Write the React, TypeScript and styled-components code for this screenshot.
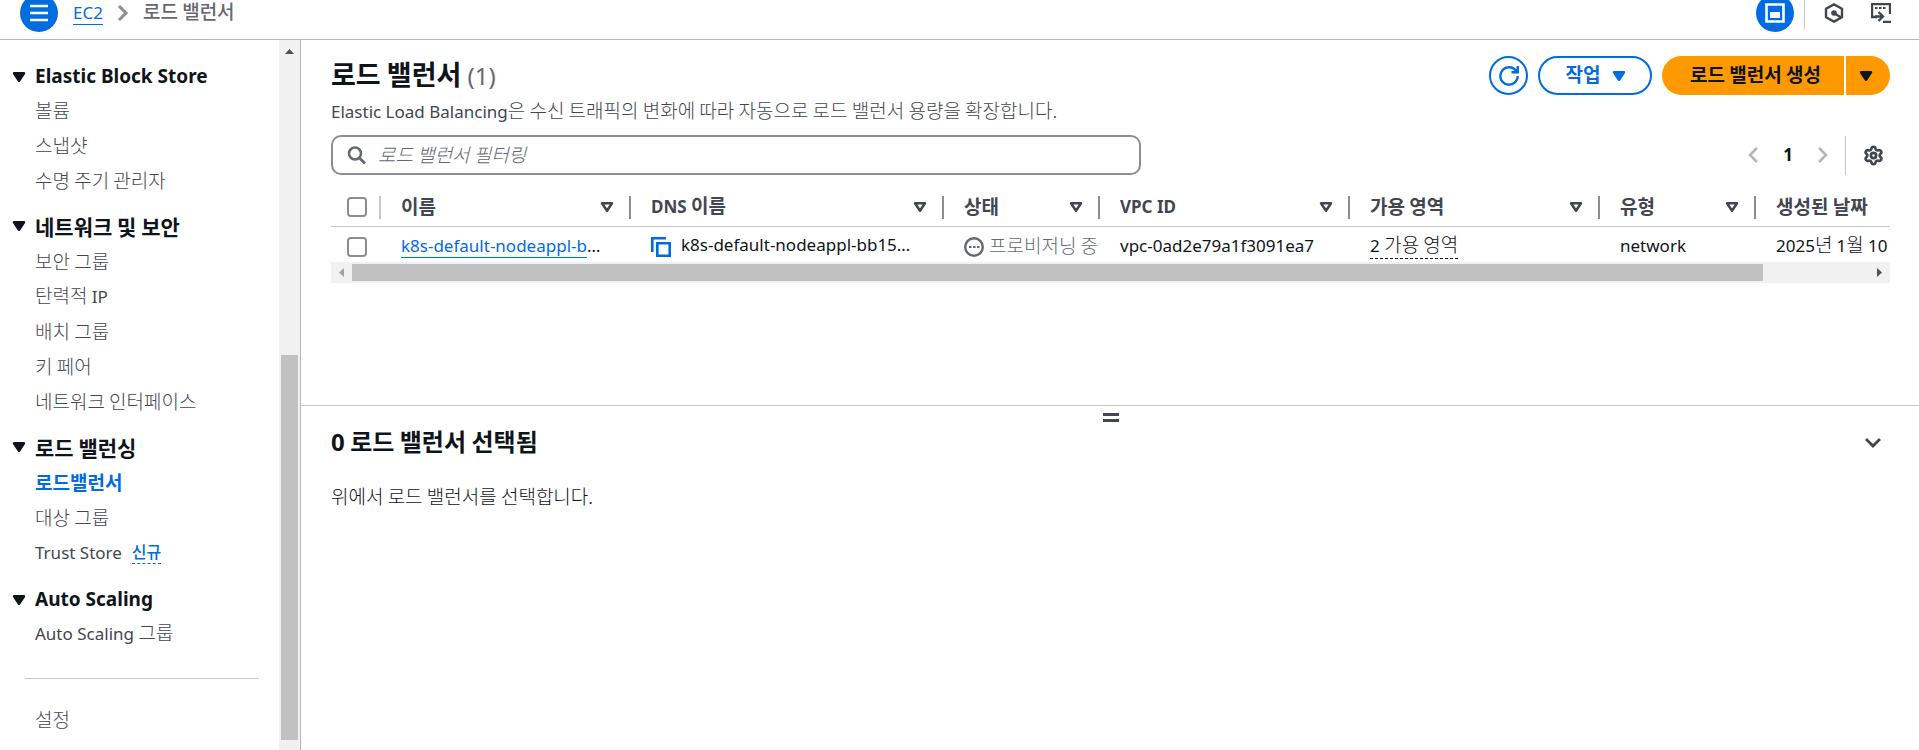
import React from 'react';
import styled, { createGlobalStyle, css } from 'styled-components';
import { Settings } from 'lucide-react';

const color = {
  text: '#0f141a',
  body: '#424650',
  muted: '#656871',
  blue: '#006ce0',
  orange: '#ff9900',
  line: '#b4b4bb',
  softLine: '#c6c6cd',
  control: '#8c8c94',
};

const GlobalStyle = createGlobalStyle`
  *, *::before, *::after { box-sizing: border-box; }
  body {
    margin: 0;
    background: #fff;
    color: ${color.text};
    font: 300 19px/25px 'Noto Sans CJK KR', sans-serif;
  }
  button, input { font: inherit; color: inherit; }
  h1, h2, p, ul, ol { margin: 0; padding: 0; font: inherit; }
  ul, ol { list-style: none; }
`;

const latinFont = css`
  font-family: 'Noto Sans', 'Noto Sans CJK KR', sans-serif;
`;

/* Latin runs inside Korean copy */
const Latin = styled.span<{ $bold?: boolean; $size?: number }>`
  ${latinFont}
  font-size: ${(p) => p.$size ?? 17}px;
  font-weight: ${(p) => (p.$bold ? 700 : 400)};
`;

const Icon = styled.svg<{ $size?: number }>`
  display: block;
  flex: none;
  width: ${(p) => p.$size ?? 20}px;
  height: ${(p) => p.$size ?? 20}px;
  fill: none;
  stroke: currentColor;
  stroke-width: 2;
`;

const Caret = ({ hollow }: { hollow?: boolean }) => (
  <Icon viewBox="0 0 16 16" aria-hidden="true">
    <path d="M4 5h8l-4 6-4-6Z" fill={hollow ? 'none' : 'currentColor'} strokeLinejoin="round" strokeWidth="2" />
  </Icon>
);

const Shell = styled.div`
  display: flex;
  flex-direction: column;
  min-height: 100vh;
`;

const TopBar = styled.header`
  display: flex;
  align-items: flex-end;
  justify-content: space-between;
  height: 40px;
  padding: 0 28px 7px 20px;
  border-bottom: 1px solid ${color.line};
  overflow: hidden;
`;

const TopGroup = styled.div`
  display: flex;
  align-items: center;
  height: 38px;
`;

const RoundButton = styled.button`
  display: grid;
  place-items: center;
  width: 38px;
  height: 38px;
  padding: 0;
  border: 0;
  border-radius: 50%;
  background: ${color.blue};
  color: #fff;
`;

const PlainButton = styled.button<{ $tone?: string }>`
  display: grid;
  place-items: center;
  padding: 0;
  border: 0;
  background: none;
  color: ${(p) => p.$tone ?? color.body};
`;

const Crumbs = styled.ol`
  display: flex;
  align-items: center;
  gap: 10px;
  margin-left: 15px;
  li { display: flex; align-items: center; }
`;

const CrumbLink = styled.a`
  ${latinFont}
  border-bottom: 1px solid ${color.blue};
  color: ${color.blue};
  font-size: 17px;
  font-weight: 400;
  line-height: 22px;
  text-decoration: none;
`;

const CrumbCurrent = styled.span`
  padding-bottom: 4px;
  color: ${color.muted};
  font-weight: 500;
  line-height: 22px;
`;

const CrumbArrow = styled(Icon)`
  color: ${color.control};
`;

const TopTools = styled(TopGroup)`
  gap: 10px;
`;

const TopDivider = styled.span`
  width: 1px;
  height: 32px;
  background: ${color.softLine};
`;

const ToolPair = styled.div`
  display: flex;
  gap: 27px;
  margin-left: 9px;
`;

const Body = styled.div`
  display: flex;
  flex: 1;
`;

const Side = styled.aside`
  display: flex;
  flex: none;
  width: 301px;
  border-right: 1px solid ${color.line};
`;

const SideNav = styled.nav`
  flex: 1;
  padding: 19px 20px 10px 9px;
`;

const NavHeading = styled.h2<{ $latin?: boolean }>`
  display: flex;
  align-items: center;
  gap: 6px;
  height: 35px;
  font-weight: 700;
  ${(p) => p.$latin
    ? css`${latinFont} font-size: 19px;`
    : css`padding-bottom: 3px; font-size: 21px;`}
`;

const NavSection = styled.section`
  margin-bottom: 11px;
`;

const NavItem = styled.li`
  display: flex;
  align-items: center;
  gap: 10px;
  height: 35px;
  padding: 0 0 4px 26px;
`;

const NavLink = styled.a<{ $active?: boolean }>`
  color: ${(p) => (p.$active ? color.blue : color.body)};
  font-weight: ${(p) => (p.$active ? 700 : 300)};
  text-decoration: none;
`;

const NewBadge = styled.button`
  padding: 0;
  border: 0;
  border-bottom: 1px dashed ${color.blue};
  background: none;
  color: ${color.blue};
  font-size: 16px;
  font-weight: 500;
  line-height: 24px;
`;

const NavRule = styled.hr`
  height: 1px;
  margin: 26px 0 24px 16px;
  border: 0;
  background: ${color.softLine};
`;

const SideTrack = styled.div`
  display: flex;
  flex-direction: column;
  flex: none;
  width: 21px;
  padding: 9px 2px 10px;
  background: #f1f1f1;
`;

const SideArrow = styled.svg`
  width: 9px;
  height: 5px;
  margin: 0 auto;
  fill: #505050;
`;

const SideThumb = styled.div`
  height: 385px;
  margin-top: auto;
  background: #c1c1c1;
`;

const Main = styled.main`
  display: flex;
  flex-direction: column;
  flex: 1;
  min-width: 0;
`;

const ListPane = styled.section`
  height: 366px;
  padding: 16px 29px 0 30px;
  border-bottom: 1px solid ${color.softLine};
`;

const Row = styled.div`
  display: flex;
  align-items: center;
  justify-content: space-between;
`;

const Title = styled.h1`
  padding-bottom: 4px;
  font-size: 27px;
  font-weight: 700;
  line-height: 32px;
`;

const Count = styled.span`
  ${latinFont}
  color: ${color.muted};
  font-size: 24px;
  font-weight: 400;
  line-height: 24px;
`;

const Actions = styled.div`
  display: flex;
  gap: 10px;
`;

const OutlineButton = styled.button<{ $round?: boolean }>`
  display: flex;
  align-items: center;
  justify-content: center;
  gap: 9px;
  width: ${(p) => (p.$round ? 39 : 114)}px;
  height: 39px;
  padding: ${(p) => (p.$round ? '0' : '0 0 0 5px')};
  border: 2px solid ${color.blue};
  border-radius: 20px;
  background: #fff;
  color: ${color.blue};
  font-weight: 700;
`;

const ButtonText = styled.span`
  padding-bottom: 4px;
`;

const Split = styled.div`
  display: flex;
  gap: 2px;
`;

const CreateButton = styled.button<{ $side: 'left' | 'right' }>`
  display: grid;
  place-items: center;
  height: 39px;
  border: 0;
  background: ${color.orange};
  color: ${color.text};
  font-weight: 700;
  ${(p) => p.$side === 'left'
    ? css`padding: 0 23px 0 28px; border-radius: 20px 0 0 20px;`
    : css`width: 44px; padding: 0 4px 0 0; border-radius: 0 20px 20px 0;`}
`;

const Description = styled.p`
  padding: 2px 0 10px;
  color: ${color.body};
  line-height: 26px;
`;

const SearchBox = styled.label`
  display: flex;
  align-items: center;
  gap: 11px;
  flex: 0 1 810px;
  height: 40px;
  padding: 0 14px;
  border: 2px solid ${color.control};
  border-radius: 10px;
  color: ${color.muted};
`;

const SearchInput = styled.input`
  flex: 1;
  min-width: 0;
  padding: 0 0 4px;
  border: 0;
  outline: 0;
  background: none;
  &::placeholder { color: ${color.muted}; font-style: italic; opacity: 1; }
`;

const Pager = styled.nav`
  display: flex;
  align-items: center;
  padding-right: 6px;
`;

const PageNumber = styled.button`
  ${latinFont}
  width: 50px;
  padding: 0 0 2px;
  border: 0;
  background: none;
  font-size: 17px;
  font-weight: 700;
`;

const PagerDivider = styled.span`
  width: 1px;
  height: 39px;
  margin: 0 17px 0 12px;
  background: ${color.softLine};
`;

const TableClip = styled.div`
  margin-top: 13px;
  overflow: hidden;
`;

const Table = styled.table`
  width: 1731px;
  border-collapse: separate;
  border-spacing: 0;
  table-layout: fixed;
`;

const Col = styled.col<{ $w: number }>`
  width: ${(p) => p.$w}px;
`;

const Th = styled.th`
  height: 39px;
  padding: 0 0 0 20px;
  border-bottom: 1px solid ${color.softLine};
  color: ${color.body};
  font-weight: 700;
  text-align: left;
  white-space: nowrap;
`;

const CheckTh = styled(Th)`
  padding-left: 16px;
`;

const ThInner = styled.div`
  display: flex;
  align-items: center;
`;

const ThLabel = styled.span`
  flex: 1;
  padding-bottom: 3px;
`;

const Resizer = styled.span<{ $light?: boolean }>`
  width: 2px;
  height: 23px;
  margin-left: 12px;
  background: ${(p) => (p.$light ? color.softLine : color.control)};
`;

const Td = styled.td`
  height: 35px;
  padding: 0 0 0 20px;
  white-space: nowrap;
`;

const CheckTd = styled(Td)`
  padding: 4px 0 0 16px;
`;

const Checkbox = styled.input`
  display: block;
  width: 20px;
  height: 20px;
  margin: 0;
  appearance: none;
  border: 2px solid ${color.control};
  border-radius: 4px;
  background: #fff;
`;

const NameLink = styled.a`
  ${latinFont}
  border-bottom: 1px solid ${color.blue};
  color: ${color.blue};
  font-size: 17px;
  font-weight: 400;
  line-height: 22px;
  text-decoration: none;
`;

const Inline = styled.span<{ $tone?: string; $gap: number }>`
  display: flex;
  align-items: center;
  gap: ${(p) => p.$gap}px;
  color: ${(p) => p.$tone ?? 'inherit'};
  svg { margin-top: 4px; }
`;

const ZoneButton = styled.button`
  padding: 0;
  border: 0;
  border-bottom: 1px dashed ${color.text};
  background: none;
  line-height: 24px;
`;

const HTrack = styled.div`
  display: flex;
  align-items: center;
  height: 21px;
  background: #f1f1f1;
`;

const HArrow = styled.svg<{ $dim?: boolean }>`
  flex: none;
  width: 5px;
  height: 9px;
  margin: 0 8px;
  fill: ${(p) => (p.$dim ? '#a3a3a3' : '#505050')};
`;

const HRoom = styled.div`
  flex: 1;
  height: 17px;
`;

const HThumb = styled.div`
  width: 93%;
  height: 17px;
  background: #c1c1c1;
`;

const DetailPane = styled.section`
  flex: 1;
  padding: 7px 29px 0 30px;
`;

const Grip = styled.div`
  width: 16px;
  height: 9px;
  margin: 0 auto;
  border: solid ${color.body};
  border-width: 3px 0;
`;

const DetailRow = styled(Row)`
  padding: 1px 7px 0 0;
`;

const DetailTitle = styled.h2`
  padding-bottom: 2px;
  font-size: 24px;
  font-weight: 700;
  line-height: 36px;
`;

const Hint = styled.p`
  margin-top: 21px;
`;

type Entry = { ko?: string; en?: string; tail?: string; active?: boolean; badge?: string };
const sections: { title: string; latin?: boolean; items: Entry[] }[] = [
  { title: 'Elastic Block Store', latin: true, items: [{ ko: '볼륨' }, { ko: '스냅샷' }, { ko: '수명 주기 관리자' }] },
  {
    title: '네트워크 및 보안',
    items: [{ ko: '보안 그룹' }, { ko: '탄력적 ', tail: 'IP' }, { ko: '배치 그룹' }, { ko: '키 페어' }, { ko: '네트워크 인터페이스' }],
  },
  {
    title: '로드 밸런싱',
    items: [{ ko: '로드밸런서', active: true }, { ko: '대상 그룹' }, { en: 'Trust Store', badge: '신규' }],
  },
  { title: 'Auto Scaling', latin: true, items: [{ en: 'Auto Scaling ', ko: '그룹' }] },
];

const columns: { width: number; label: React.ReactNode }[] = [
  { width: 250, label: '이름' },
  { width: 313, label: <><Latin $bold>DNS</Latin> 이름</> },
  { width: 156, label: '상태' },
  { width: 250, label: <Latin $bold>VPC ID</Latin> },
  { width: 250, label: '가용 영역' },
  { width: 156, label: '유형' },
  { width: 306, label: '생성된 날짜' },
];

export default function App() {
  return (
    <Shell>
      <GlobalStyle />
      <TopBar>
        <TopGroup>
          <RoundButton aria-label="메뉴">
            <Icon viewBox="0 0 20 20"><path d="M1 3h18M1 10h18M1 17h18" strokeWidth="2.4" /></Icon>
          </RoundButton>
          <nav aria-label="breadcrumb">
            <Crumbs>
              <li><CrumbLink href="#ec2">EC2</CrumbLink></li>
              <li><CrumbArrow viewBox="0 0 20 20"><path d="m6 3 7 7-7 7" strokeWidth="3" /></CrumbArrow></li>
              <li><CrumbCurrent>로드 밸런서</CrumbCurrent></li>
            </Crumbs>
          </nav>
        </TopGroup>
        <TopTools>
          <RoundButton aria-label="분할 패널">
            <Icon viewBox="0 0 20 20">
              <path d="M1.5 1.5h17v17h-17z" strokeWidth="2.6" />
              <path d="M5 9h10v6H5z" fill="currentColor" stroke="none" />
            </Icon>
          </RoundButton>
          <TopDivider />
          <ToolPair>
            <PlainButton aria-label="진단">
              <Icon viewBox="0 0 20 20">
                <path d="m10 1.4 8 4.4v8.4l-8 4.4-8-4.4V5.8Z" strokeLinejoin="round" strokeWidth="2.4" />
                <circle cx="10" cy="10" r="2.8" fill="currentColor" stroke="none" />
                <path d="m10 10 7 4.5" strokeWidth="2.4" />
              </Icon>
            </PlainButton>
            <PlainButton aria-label="CloudShell">
              <Icon viewBox="0 0 20 20">
                <path d="M19 11V1H1v13h5M12 19h8" strokeWidth="2.4" />
                <path d="M4 13.5h8M7.500 9l4.500 4.500L7.500 18" strokeWidth="2.4" />
                <path d="M4 5h2.500M8 5h2.500M12 5h2.500" />
              </Icon>
            </PlainButton>
          </ToolPair>
        </TopTools>
      </TopBar>

      <Body>
        <Side>
          <SideNav>
            {sections.map((s) => (
              <NavSection key={s.title}>
                <NavHeading $latin={s.latin}><Caret />{s.title}</NavHeading>
                <ul>
                  {s.items.map((it, i) => (
                    <NavItem key={i}>
                      <NavLink href="#" $active={it.active}>
                        {it.en && <Latin>{it.en}</Latin>}{it.ko}{it.tail && <Latin>{it.tail}</Latin>}
                      </NavLink>
                      {it.badge && <NewBadge>{it.badge}</NewBadge>}
                    </NavItem>
                  ))}
                </ul>
              </NavSection>
            ))}
            <NavRule />
            <ul><NavItem><NavLink href="#">설정</NavLink></NavItem></ul>
          </SideNav>
          <SideTrack>
            <SideArrow viewBox="0 0 9 5"><path d="M4.500 0 9 5H0Z" /></SideArrow>
            <SideThumb />
          </SideTrack>
        </Side>

        <Main>
          <ListPane>
            <Row>
              <Title>로드 밸런서 <Count>(1)</Count></Title>
              <Actions>
                <OutlineButton $round aria-label="새로 고침">
                  <Icon viewBox="0 0 16 16">
                    <path d="M15 8c0 3.900-3.100 7-7 7s-7-3.100-7-7 3.100-7 7-7c2.800 0 5.100 1.500 6.300 4M10 5h5V0" strokeWidth="1.9" />
                  </Icon>
                </OutlineButton>
                <OutlineButton><ButtonText>작업</ButtonText><Caret /></OutlineButton>
                <Split>
                  <CreateButton $side="left"><ButtonText>로드 밸런서 생성</ButtonText></CreateButton>
                  <CreateButton $side="right" aria-label="추가 생성 옵션"><Caret /></CreateButton>
                </Split>
              </Actions>
            </Row>
            <Description>
              <Latin>Elastic Load Balancing</Latin>은 수신 트래픽의 변화에 따라 자동으로 로드 밸런서 용량을 확장합니다.
            </Description>
            <Row>
              <SearchBox>
                <Icon viewBox="0 0 20 20"><circle cx="8" cy="8.500" r="6" strokeWidth="2.500" /><path d="m12.500 13 5.500 5.500" strokeWidth="2.800" /></Icon>
                <SearchInput type="text" placeholder="로드 밸런서 필터링" aria-label="로드 밸런서 필터링" />
              </SearchBox>
              <Pager aria-label="페이지">
                <PlainButton aria-label="이전 페이지" $tone="#b4b4bb">
                  <Icon viewBox="0 0 20 20"><path d="m14 3-7 7 7 7" strokeWidth="2.500" /></Icon>
                </PlainButton>
                <PageNumber>1</PageNumber>
                <PlainButton aria-label="다음 페이지" $tone="#b4b4bb">
                  <Icon viewBox="0 0 20 20"><path d="m6 3 7 7-7 7" strokeWidth="2.500" /></Icon>
                </PlainButton>
                <PagerDivider />
                <PlainButton aria-label="기본 설정"><Settings size={21} strokeWidth={3} /></PlainButton>
              </Pager>
            </Row>

            <TableClip>
              <Table>
                <colgroup>
                  <Col $w={50} />
                  {columns.map((c, i) => <Col key={i} $w={c.width} />)}
                </colgroup>
                <thead>
                  <tr>
                    <CheckTh><ThInner><Checkbox type="checkbox" aria-label="모두 선택" /><Resizer $light /></ThInner></CheckTh>
                    {columns.map((c, i) => (
                      <Th key={i}>
                        <ThInner><ThLabel>{c.label}</ThLabel><Caret hollow /><Resizer /></ThInner>
                      </Th>
                    ))}
                  </tr>
                </thead>
                <tbody>
                  <tr>
                    <CheckTd><Checkbox type="checkbox" aria-label="k8s-default-nodeappl-b 선택" /></CheckTd>
                    <Td><NameLink href="#lb">k8s-default-nodeappl-b</NameLink><Latin>…</Latin></Td>
                    <Td>
                      <Inline $gap={10}>
                        <Icon viewBox="0 0 20 20" color={color.blue}><path d="M1.300 15V1.300H15M6.300 6.300h12.400v12.400H6.300z" strokeWidth="2.6" /></Icon>
                        <Latin>k8s-default-nodeappl-bb15…</Latin>
                      </Inline>
                    </Td>
                    <Td>
                      <Inline $gap={5} $tone={color.muted}>
                        <Icon viewBox="0 0 20 20"><circle cx="10" cy="10" r="8.800" strokeWidth="2.400" /><path d="M5 10h2.500M9 10h2.500M13 10h2.500" /></Icon>
                        프로비저닝 중
                      </Inline>
                    </Td>
                    <Td><Latin>vpc-0ad2e79a1f3091ea7</Latin></Td>
                    <Td><ZoneButton><Latin>2 </Latin>가용 영역</ZoneButton></Td>
                    <Td><Latin>network</Latin></Td>
                    <Td><Latin>2025</Latin>년 <Latin>1</Latin>월 <Latin>10</Latin></Td>
                  </tr>
                </tbody>
              </Table>
            </TableClip>
            <HTrack>
              <HArrow $dim viewBox="0 0 5 9"><path d="M0 4.500 5 0v9Z" /></HArrow>
              <HRoom><HThumb /></HRoom>
              <HArrow viewBox="0 0 5 9"><path d="M5 4.500 0 0v9Z" /></HArrow>
            </HTrack>
          </ListPane>

          <DetailPane>
            <Grip />
            <DetailRow>
              <DetailTitle><Latin $bold $size={24}>0</Latin> 로드 밸런서 선택됨</DetailTitle>
              <PlainButton aria-label="패널 닫기">
                <Icon viewBox="0 0 20 20"><path d="m3 6 7 7 7-7" strokeWidth="2.800" /></Icon>
              </PlainButton>
            </DetailRow>
            <Hint>위에서 로드 밸런서를 선택합니다.</Hint>
          </DetailPane>
        </Main>
      </Body>
    </Shell>
  );
}
